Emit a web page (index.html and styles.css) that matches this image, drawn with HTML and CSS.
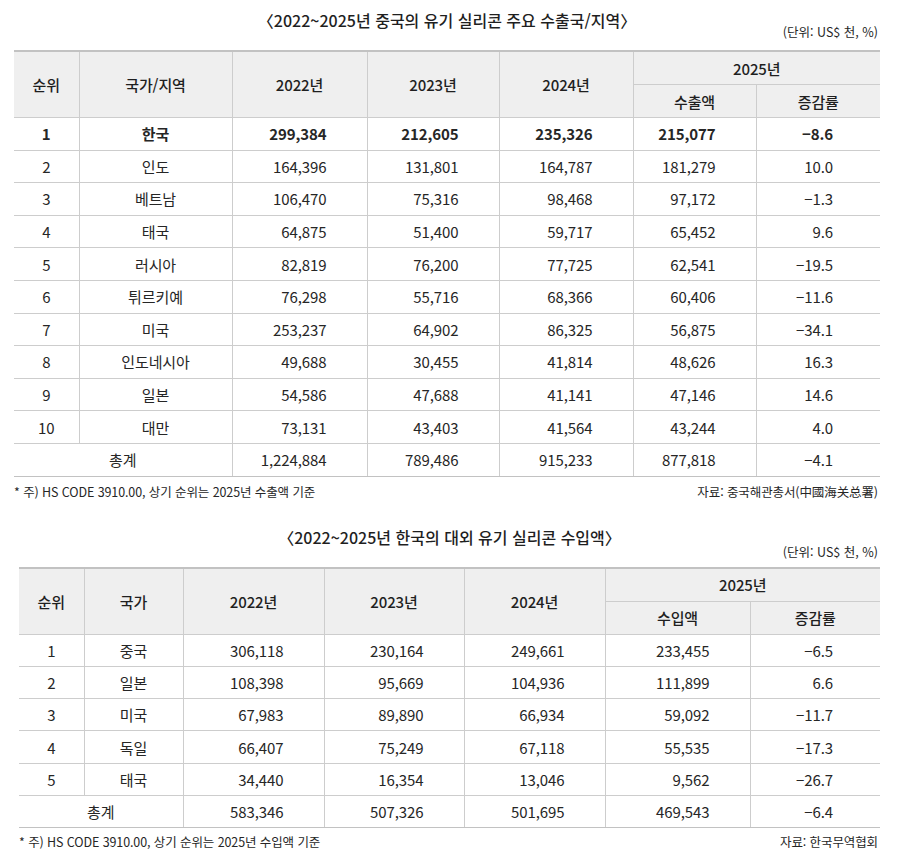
FILE: index.html
```html
<!DOCTYPE html>
<html lang="ko">
<head>
<meta charset="utf-8">
<link rel="stylesheet" href="styles.css">
</head>
<body>
<div class="page">
  <section class="block block-one">
    <h2 class="title">〈2022~2025년 중국의 유기 실리콘 주요 수출국/지역〉</h2>
    <div class="unit">(단위: US$ 천, %)</div>
    <table class="grid grid-one">
      <colgroup>
        <col style="width:65px"><col style="width:153px"><col style="width:135px"><col style="width:132px"><col style="width:134px"><col style="width:123px"><col style="width:124px">
      </colgroup>
      <thead>
        <tr><th rowspan="2" class="first">순위</th><th rowspan="2">국가/지역</th><th rowspan="2">2022년</th><th rowspan="2">2023년</th><th rowspan="2">2024년</th><th colspan="2" class="last">2025년</th></tr>
        <tr><th>수출액</th><th class="last">증감률</th></tr>
      </thead>
      <tbody>
        <tr class="strong"><td class="first c">1</td><td class="c">한국</td><td class="n">299,384</td><td class="n">212,605</td><td class="n">235,326</td><td class="n">215,077</td><td class="r last">−8.6</td></tr>
        <tr><td class="first c">2</td><td class="c">인도</td><td class="n">164,396</td><td class="n">131,801</td><td class="n">164,787</td><td class="n">181,279</td><td class="r last">10.0</td></tr>
        <tr><td class="first c">3</td><td class="c">베트남</td><td class="n">106,470</td><td class="n">75,316</td><td class="n">98,468</td><td class="n">97,172</td><td class="r last">−1.3</td></tr>
        <tr><td class="first c">4</td><td class="c">태국</td><td class="n">64,875</td><td class="n">51,400</td><td class="n">59,717</td><td class="n">65,452</td><td class="r last">9.6</td></tr>
        <tr><td class="first c">5</td><td class="c">러시아</td><td class="n">82,819</td><td class="n">76,200</td><td class="n">77,725</td><td class="n">62,541</td><td class="r last">−19.5</td></tr>
        <tr><td class="first c">6</td><td class="c">튀르키예</td><td class="n">76,298</td><td class="n">55,716</td><td class="n">68,366</td><td class="n">60,406</td><td class="r last">−11.6</td></tr>
        <tr><td class="first c">7</td><td class="c">미국</td><td class="n">253,237</td><td class="n">64,902</td><td class="n">86,325</td><td class="n">56,875</td><td class="r last">−34.1</td></tr>
        <tr><td class="first c">8</td><td class="c">인도네시아</td><td class="n">49,688</td><td class="n">30,455</td><td class="n">41,814</td><td class="n">48,626</td><td class="r last">16.3</td></tr>
        <tr><td class="first c">9</td><td class="c">일본</td><td class="n">54,586</td><td class="n">47,688</td><td class="n">41,141</td><td class="n">47,146</td><td class="r last">14.6</td></tr>
        <tr><td class="first c">10</td><td class="c">대만</td><td class="n">73,131</td><td class="n">43,403</td><td class="n">41,564</td><td class="n">43,244</td><td class="r last">4.0</td></tr>
        <tr><td colspan="2" class="first c">총계</td><td class="n">1,224,884</td><td class="n">789,486</td><td class="n">915,233</td><td class="n">877,818</td><td class="r last">−4.1</td></tr>
      </tbody>
    </table>
    <div class="notes notes-one">
      <span class="note">* 주) HS CODE 3910.00, 상기 순위는 2025년 수출액 기준</span>
      <span class="source">자료: 중국해관총서(中國海关总署)</span>
    </div>
  </section>

  <section class="block block-two">
    <h2 class="title">〈2022~2025년 한국의 대외 유기 실리콘 수입액〉</h2>
    <div class="unit">(단위: US$ 천, %)</div>
    <table class="grid grid-two">
      <colgroup>
        <col style="width:65px"><col style="width:99px"><col style="width:141px"><col style="width:140px"><col style="width:141px"><col style="width:145px"><col style="width:130px">
      </colgroup>
      <thead>
        <tr><th rowspan="2" class="first">순위</th><th rowspan="2">국가</th><th rowspan="2">2022년</th><th rowspan="2">2023년</th><th rowspan="2">2024년</th><th colspan="2" class="last">2025년</th></tr>
        <tr><th>수입액</th><th class="last">증감률</th></tr>
      </thead>
      <tbody>
        <tr><td class="first c">1</td><td class="c">중국</td><td class="n">306,118</td><td class="n">230,164</td><td class="n">249,661</td><td class="n">233,455</td><td class="r last">−6.5</td></tr>
        <tr><td class="first c">2</td><td class="c">일본</td><td class="n">108,398</td><td class="n">95,669</td><td class="n">104,936</td><td class="n">111,899</td><td class="r last">6.6</td></tr>
        <tr><td class="first c">3</td><td class="c">미국</td><td class="n">67,983</td><td class="n">89,890</td><td class="n">66,934</td><td class="n">59,092</td><td class="r last">−11.7</td></tr>
        <tr><td class="first c">4</td><td class="c">독일</td><td class="n">66,407</td><td class="n">75,249</td><td class="n">67,118</td><td class="n">55,535</td><td class="r last">−17.3</td></tr>
        <tr><td class="first c">5</td><td class="c">태국</td><td class="n">34,440</td><td class="n">16,354</td><td class="n">13,046</td><td class="n">9,562</td><td class="r last">−26.7</td></tr>
        <tr><td colspan="2" class="first c">총계</td><td class="n">583,346</td><td class="n">507,326</td><td class="n">501,695</td><td class="n">469,543</td><td class="r last">−6.4</td></tr>
      </tbody>
    </table>
    <div class="notes notes-two">
      <span class="note">* 주) HS CODE 3910.00, 상기 순위는 2025년 수입액 기준</span>
      <span class="source">자료: 한국무역협회</span>
    </div>
  </section>
</div>
</body>
</html>
```

FILE: styles.css
```css
html, body {
  margin: 0;
  padding: 0;
  background: #ffffff;
}

body {
  font-family: "Noto Sans CJK KR", "Noto Sans", sans-serif;
  color: #262626;
  width: 898px;
}

.page {
  padding: 0 18px 0 14px;
}

.block-two {
  margin-left: 5px;
}

.title {
  margin: 0;
  padding-top: 10px;
  font-size: 16px;
  line-height: 20px;
  font-weight: 500;
  text-align: center;
  letter-spacing: 0;
  color: #1f1f1f;
}

.block-two .title {
  padding-top: 0;
  margin-top: 27px;
}

.unit {
  margin-top: -6px;
  text-align: right;
  font-size: 12.5px;
  line-height: 16px;
  letter-spacing: 0;
  padding-right: 2px;
}

.block-two .unit {
  margin-top: -3px;
}

.grid {
  border-collapse: collapse;
  table-layout: fixed;
  margin-top: 10px;
  font-size: 15px;
  letter-spacing: -0.1px;
  border-top: 2px solid #c2c2c2;
}

.grid-one {
  width: 866px;
}

.grid-two {
  width: 861px;
  margin-top: 7px;
}

.grid th,
.grid td {
  border: 1px solid #cdcdcd;
  padding: 0;
  white-space: nowrap;
}

.grid th {
  background: #efefef;
  font-weight: 500;
  height: 32px;
  text-align: center;
  color: #1f1f1f;
}

.grid td {
  height: 31.6px;
}

.grid-two td {
  height: 31.3px;
}

.grid .first {
  border-left: none;
}

.grid .last {
  border-right: none;
}

.grid tbody tr:last-child td {
  border-bottom: 1px solid #c2c2c2;
}

.c {
  text-align: center;
}

.n {
  text-align: right;
  padding-right: 40px !important;
}

.r {
  text-align: right;
  padding-right: 47px !important;
}

.strong td {
  font-weight: 700;
}

.notes {
  display: flex;
  justify-content: space-between;
  align-items: center;
  font-size: 12.5px;
  line-height: 16px;
  letter-spacing: -0.1px;
  margin-top: 7px;
  padding-right: 2px;
}

.notes-two {
  margin-top: 6px;
}
```
